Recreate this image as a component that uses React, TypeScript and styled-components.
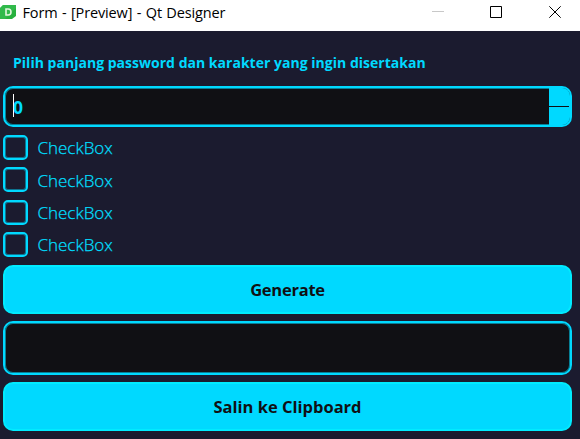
import React from "react";
import styled, { createGlobalStyle } from "styled-components";

const GlobalStyle = createGlobalStyle`
  * { box-sizing: border-box; }
  html, body { margin: 0; height: 100%; overflow: hidden; background: #1b1b2f; }
  body { font-family: "Open Sans", "Noto Sans", sans-serif; }
`;

const Window = styled.div`
  width: 580px;
  height: 439px;
  background: #1b1b2f;
  color: #00d9ff;
`;

const TitleBar = styled.header`
  display: flex;
  height: 31px;
  background: #fff;
  color: #000;
`;

const AppIcon = styled.svg`
  width: 16px;
  height: 15px;
  margin: 5px 6.5px 0 0;
`;

const Title = styled.span`
  flex: 1;
  font-size: 14.5px;
  line-height: 26px;
  letter-spacing: -0.13px;
  word-spacing: 0.8px;
  white-space: nowrap;
`;

const WindowControls = styled.svg`
  width: 148px;
  height: 31px;
`;

const Form = styled.main`
  display: flex;
  flex-direction: column;
  padding: 0 8px 0 3px;
`;

const Prompt = styled.label`
  height: 55px;
  padding: 0 10px;
  font-size: 14px;
  font-weight: 700;
  line-height: 63px;
  letter-spacing: 0.02px;
  white-space: nowrap;
`;

const Field = styled.div<{ $height: number }>`
  display: flex;
  align-items: center;
  height: ${(p) => p.$height}px;
  border: 2px solid #00d9ff;
  border-radius: 10px;
  background: #101014;
  box-shadow: inset 0 0 0 1px #087f96;
  overflow: hidden;
`;

const Caret = styled.span`
  width: 1px;
  height: 23px;
  margin: -2px 0 0 8px;
  background: #fff;
`;

const SpinValue = styled.span`
  flex: 1;
  margin-left: -1px;
  font-size: 17.5px;
  font-weight: 700;
  line-height: 24px;
`;

const SpinButtons = styled.div`
  display: flex;
  flex-direction: column;
  justify-content: center;
  align-self: stretch;
  width: 21px;
  padding-right: 1px;
  background: #00d9ff;
`;

const SpinDivider = styled.span`
  height: 1px;
  background: #101014;
`;

const Options = styled.div`
  display: flex;
  flex-direction: column;
  justify-content: space-between;
  height: 122px;
  margin: 8px 0;
`;

const Option = styled.label`
  display: flex;
  align-items: center;
  gap: 9.5px;
  height: 25px;
  color: #00e1ff;
  font-size: 17px;
  font-weight: 300;
  line-height: 25px;
  letter-spacing: -0.02px;
  -webkit-text-stroke: 0.25px #00d9ff;
`;

const OptionText = styled.span`
  padding-top: 0.8px;
`;

const Box = styled.span`
  width: 25px;
  height: 25px;
  border: 2px solid #00d9ff;
  border-radius: 5px;
  box-shadow: inset 0 0 0 1px #0e7390;
`;

const Button = styled.button<{ $spacing: number }>`
  height: 49px;
  padding: 0;
  border: 2px solid #00ebff;
  border-radius: 10px;
  background: #00d9ff;
  color: #101014;
  font: 700 16.5px/45px "Open Sans", "Noto Sans", sans-serif;
  letter-spacing: ${(p) => p.$spacing}px;
`;

const Result = styled(Field)`
  margin: 7px 0;
`;

const options = ["CheckBox", "CheckBox", "CheckBox", "CheckBox"];

export default function App() {
  return (
    <Window>
      <GlobalStyle />
      <TitleBar>
        <AppIcon viewBox="0 0 16 15">
          <path d="M0 3 3 0h13v11l-4 3H0z" fill="#27b13e" />
          <path d="M0 3 3 0h13v3L5 14H0z" fill="#3cc457" opacity=".5" />
          <path d="M6 4h2.2a2.8 3 0 0 1 0 6H6z" fill="none" stroke="#e4f7df" strokeWidth="1.6" />
        </AppIcon>
        <Title>Form - [Preview] - Qt Designer</Title>
        <WindowControls viewBox="0 0 148 31" fill="none">
          <path d="M0 11.5h12" stroke="#c8c8c8" />
          <path d="M58.5 6.5h11v11h-11z" stroke="#000" />
          <path d="m117.3 6.3 11.4 11.4m0-11.4-11.4 11.4" stroke="#000" />
        </WindowControls>
      </TitleBar>
      <Form>
        <Prompt>Pilih panjang password dan karakter yang ingin disertakan</Prompt>
        <Field $height={41}>
          <Caret />
          <SpinValue>0</SpinValue>
          <SpinButtons>
            <SpinDivider />
          </SpinButtons>
        </Field>
        <Options>
          {options.map((text, i) => (
            <Option key={i}>
              <Box />
              <OptionText>{text}</OptionText>
            </Option>
          ))}
        </Options>
        <Button $spacing={-0.25}>Generate</Button>
        <Result $height={54} />
        <Button $spacing={0}>Salin ke Clipboard</Button>
      </Form>
    </Window>
  );
}
